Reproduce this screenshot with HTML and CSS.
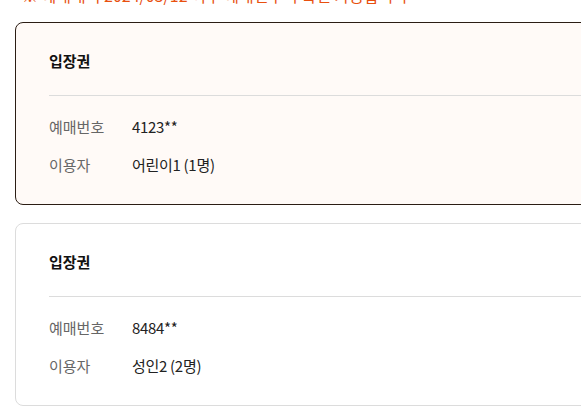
FILE: index.html
```html
<!DOCTYPE html>
<html>
<head>
    <title>예매 내역</title>
    <link rel="stylesheet" href="styles.css">
</head>
<body>
    <div class="page">
        <p class="notice">※ 예매내역 2024/05/12 이후 예매건부터 확인 가능합니다</p>

        <div class="ticket-list">
            <div class="ticket active">
                <h3 class="ticket-title">입장권</h3>
                <dl class="ticket-info">
                    <div class="info-row">
                        <dt>예매번호</dt>
                        <dd>4123**</dd>
                    </div>
                    <div class="info-row">
                        <dt>이용자</dt>
                        <dd>어린이1 (1명)</dd>
                    </div>
                </dl>
            </div>

            <div class="ticket">
                <h3 class="ticket-title">입장권</h3>
                <dl class="ticket-info">
                    <div class="info-row">
                        <dt>예매번호</dt>
                        <dd>8484**</dd>
                    </div>
                    <div class="info-row">
                        <dt>이용자</dt>
                        <dd>성인2 (2명)</dd>
                    </div>
                </dl>
            </div>
        </div>
    </div>
</body>
</html>
```

FILE: styles.css
```css
html, body {
    margin: 0;
    padding: 0;
    background: #fff;
    overflow: hidden;
}
body {
    font-family: "Noto Sans CJK KR", "Noto Sans", sans-serif;
    color: #222;
}
.page {
    width: 640px;
    padding-left: 15px;
}
.notice {
    margin: -16px 0 0 7px;
    height: 22px;
    line-height: 22px;
    font-size: 16px;
    color: #e8500f;
    white-space: nowrap;
}
.ticket-list {
    display: flex;
    flex-direction: column;
    gap: 18px;
    margin-top: 16px;
}
.ticket {
    height: 183px;
    box-sizing: border-box;
    border: 1px solid #dcdcdc;
    border-radius: 8px;
    background: #fff;
    padding: 27px 0 0 33px;
}
.ticket.active {
    border-color: #2b1d14;
    background: #fffaf7;
}
.ticket-title {
    margin: 0;
    padding-bottom: 23px;
    border-bottom: 1px solid #dcdcdc;
    font-size: 15px;
    line-height: 22px;
    font-weight: 700;
    color: #111;
}
.ticket-info {
    margin: 20px 0 0;
    display: flex;
    flex-direction: column;
    gap: 16px;
}
.info-row {
    display: flex;
    font-size: 15px;
    line-height: 22px;
}
.info-row dt {
    width: 83px;
    color: #666;
}
.info-row dd {
    margin: 0;
    color: #222;
    letter-spacing: -0.3px;
}
```
